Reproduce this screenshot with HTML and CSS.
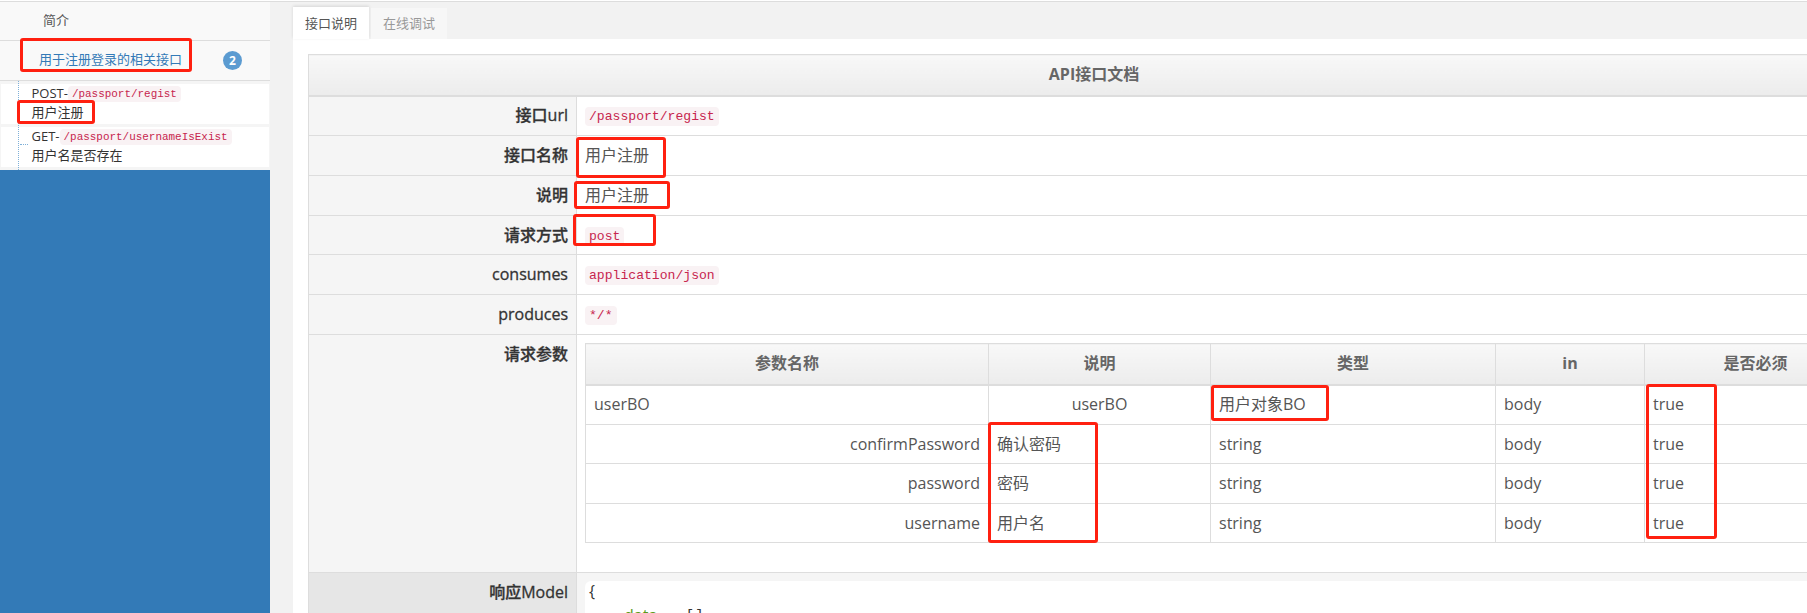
FILE: index.html
```html
<!DOCTYPE html>
<html lang="zh-CN">
<head>
  <meta charset="utf-8">
  <title>API接口文档</title>
  <link rel="stylesheet" href="styles.css">
</head>
<body>

  <div class="layout">
    <aside class="sidebar">
      <div class="nav-item">简介</div>
      <div class="nav-item nav-group">
        <span class="nav-link">用于注册登录的相关接口</span>
        <span class="badge">2</span>
      </div>
      <ul class="api-list">
        <li>
          <div>POST-<code>/passport/regist</code></div>
          <div>用户注册</div>
        </li>
        <li>
          <div>GET-<code>/passport/usernameIsExist</code></div>
          <div>用户名是否存在</div>
        </li>
      </ul>
    </aside>

    <main class="main">
      <div class="tabs">
        <div class="tab active">接口说明</div>
        <div class="tab">在线调试</div>
      </div>

      <div class="tab-pane">
        <table class="doc">
          <colgroup>
            <col class="col-label">
            <col>
          </colgroup>
          <thead>
            <tr><th colspan="2">API接口文档</th></tr>
          </thead>
          <tbody>
            <tr><td class="label">接口url</td><td><code>/passport/regist</code></td></tr>
            <tr><td class="label">接口名称</td><td>用户注册</td></tr>
            <tr><td class="label">说明</td><td>用户注册</td></tr>
            <tr><td class="label">请求方式</td><td><code>post</code></td></tr>
            <tr><td class="label">consumes</td><td><code>application/json</code></td></tr>
            <tr><td class="label">produces</td><td><code>*/*</code></td></tr>
            <tr class="tall">
              <td class="label">请求参数</td>
              <td>
                <table class="params">
                  <colgroup>
                    <col class="col-name">
                    <col class="col-desc">
                    <col class="col-type">
                    <col class="col-in">
                    <col class="col-req">
                  </colgroup>
                  <thead>
                    <tr><th>参数名称</th><th>说明</th><th>类型</th><th>in</th><th>是否必须</th></tr>
                  </thead>
                  <tbody>
                    <tr><td>userBO</td><td class="center">userBO</td><td>用户对象BO</td><td>body</td><td>true</td></tr>
                    <tr><td class="right">confirmPassword</td><td>确认密码</td><td>string</td><td>body</td><td>true</td></tr>
                    <tr><td class="right">password</td><td>密码</td><td>string</td><td>body</td><td>true</td></tr>
                    <tr><td class="right">username</td><td>用户名</td><td>string</td><td>body</td><td>true</td></tr>
                  </tbody>
                </table>
              </td>
            </tr>
            <tr class="tall model-row">
              <td class="label">响应Model</td>
              <td>
                <div class="json">
                  <div>{</div>
                  <div class="json-line"><span class="json-key">data</span><span class="json-val">[ ]</span></div>
                </div>
              </td>
            </tr>
          </tbody>
        </table>
      </div>
    </main>
  </div>

  <!-- red annotation boxes drawn on top of the screenshot -->
  <div class="mark mark-group"></div>
  <div class="mark mark-item"></div>
  <div class="mark mark-name"></div>
  <div class="mark mark-desc"></div>
  <div class="mark mark-method"></div>
  <div class="mark mark-bo"></div>
  <div class="mark mark-fields"></div>
  <div class="mark mark-required"></div>

</body>
</html>
```

FILE: styles.css
```css
:root {
  --blue:   #337ab7;
  --border: #ddd;
  --red:    #ff2010;
  --text:   #555;
  --label:  #333;
}
* { margin:0; padding:0; box-sizing:border-box; }
html, body { height:100%; }
body {
  font-family:"Open Sans","Noto Sans CJK SC",sans-serif;
  font-size:16px;
  line-height:1.42857;
  color:var(--text);
  background:#fff;
  overflow:hidden;
  position:relative;
}
code {
  font-family:"Liberation Mono",monospace;
  font-size:13.1px;
  color:#c7254e;
  background:#f9f2f4;
  border-radius:4px;
  padding:2px 4px;
  vertical-align:1px;
}

.layout {
  display:flex;
  height:calc(100% - 1px);
  margin-top:1px;
  border-top:1px solid var(--border);
}

/* sidebar */
.sidebar {
  flex:none;
  width:270px;
  background:var(--blue);
  font-size:13px;
}
.nav-item {
  height:39px;
  padding:0 0 2px 43px;
  display:flex;
  align-items:center;
  background:#f9f9f9;
  border-bottom:1px solid var(--border);
}
.nav-group {
  height:40px;
  padding-left:39px;
  justify-content:space-between;
  padding-right:28px;
}
.nav-link { color:var(--blue); }
.badge {
  width:19px;
  height:19px;
  border-radius:50%;
  background:#5b9bd1;
  color:#fff;
  font-size:12px;
  font-weight:700;
  line-height:19px;
  text-align:center;
  margin-top:2px;
}
.api-list {
  list-style:none;
  position:relative;
  background:#f5f5f5;
  padding:2.5px 1px 3.5px;
  color:#333;
}
.api-list::before {
  content:"";
  position:absolute;
  left:18px;
  top:0;
  bottom:0;
  border-left:1px dotted #7fb0d8;
}
.api-list::after {
  content:"";
  position:absolute;
  left:20px;
  top:63px;
  width:8px;
  border-top:1px dotted #7fb0d8;
}
.api-list li {
  height:40px;
  background:#fff;
  padding:0 0 0 30.5px;
}
.api-list li div { height:19px; line-height:19px; }
.api-list li + li { margin-top:3px; }
.api-list code { font-size:10.95px; padding:2px 4px; }

/* main column */
.main {
  flex:1;
  min-width:0;
  background:#f2f2f2;
  padding:5px 0 0 23px;
  overflow:hidden;
}
.tabs {
  display:flex;
  gap:2px;
  height:32px;
  align-items:flex-end;
  font-size:13px;
}
.tab {
  height:31px;
  padding:0 12px;
  line-height:31px;
  background:#f7f7f7;
  color:#999;
}
.tab.active {
  height:32px;
  line-height:32px;
  background:#fff;
  color:#555;
  box-shadow:0 -1px 3px rgba(0,0,0,0.12);
}
.tab-pane {
  background:#fff;
  padding:15px;
  height:100%;
}

table { border-collapse:collapse; table-layout:fixed; }
th, td {
  border:1px solid var(--border);
  height:39.86px;
  padding:0 8px;
  vertical-align:middle;
  text-align:left;
  font-weight:400;
}
thead th {
  height:41px;
  background:linear-gradient(#f8f8f8,#ececec);
  border-bottom-width:2px;
  color:#666;
  font-weight:700;
  text-align:center;
}
.doc { width:1572px; }
.col-label { width:268px; }
.label {
  background:#f5f5f5;
  color:var(--label);
  font-weight:500;
  -webkit-text-stroke:0.3px var(--label);
  text-align:right;
}
.tall > td { vertical-align:top; padding:8px; }
.params { width:1281px; margin-bottom:21px; }
.params td { height:39.55px; }
.col-name { width:403px; }
.col-desc { width:222px; }
.col-type { width:285px; }
.col-in { width:149px; }
.col-req { width:222px; }
.center { text-align:center; }
.right { text-align:right; }

.model-row > td { background:#f5f5f5; }
.model-row > .label { background:#e6e6e6; }
.json {
  background:#fff;
  border-radius:6px;
  padding:0 4px;
  height:60px;
  color:#333;
  line-height:20px;
}
.json-line { padding:4px 0 0 35px; }
.json-key { color:#5a9a1a; }
.json-val { margin-left:30px; }

/* annotations */
.mark {
  position:absolute;
  border:3px solid var(--red);
  border-radius:3px;
}
.mark-group    { left:20px;   top:38px;  width:172px; height:34px; }
.mark-item     { left:17px;   top:100px; width:78px;  height:24px; }
.mark-name     { left:576px;  top:137px; width:90px;  height:41px; }
.mark-desc     { left:574px;  top:181px; width:96px;  height:28px; }
.mark-method   { left:573px;  top:214px; width:83px;  height:32px; }
.mark-bo       { left:1211px; top:385px; width:118px; height:36px; }
.mark-fields   { left:988px;  top:422px; width:110px; height:121px; }
.mark-required { left:1646px; top:384px; width:71px;  height:155px; }
```
